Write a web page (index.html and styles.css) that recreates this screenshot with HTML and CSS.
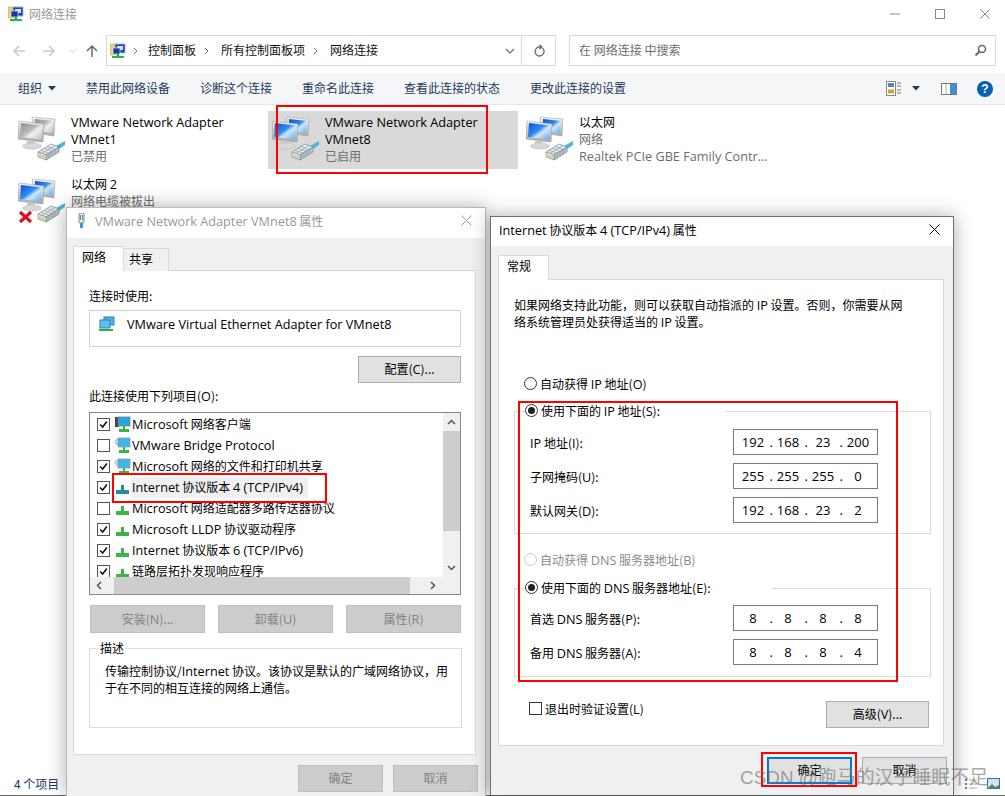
FILE: index.html
```html
<!DOCTYPE html>
<html lang="zh-CN">
<head>
<meta charset="utf-8">
<title>网络连接</title>
<link rel="stylesheet" href="styles.css">
</head>
<body>
<svg class="defs" width="0" height="0" aria-hidden="true">
  <defs>
    <linearGradient id="blue" x1="0" y1="0" x2="1" y2="1"><stop offset="0" stop-color="#0a4fd0"/><stop offset=".45" stop-color="#2f8df0"/><stop offset=".6" stop-color="#cfe8ff"/><stop offset="1" stop-color="#5aa9ef"/></linearGradient>
    <linearGradient id="grey" x1="0" y1="0" x2="1" y2="1"><stop offset="0" stop-color="#8d8d8d"/><stop offset=".45" stop-color="#b9b9b9"/><stop offset=".6" stop-color="#efefef"/><stop offset="1" stop-color="#c4c4c4"/></linearGradient>
    <linearGradient id="frame" x1="0" y1="0" x2="0" y2="1"><stop offset="0" stop-color="#f4f4f4"/><stop offset="1" stop-color="#a9a9a9"/></linearGradient>
    <symbol id="plug" viewBox="0 0 48 48">
      <path d="M38 31l9-5v4l-6 4z" fill="#49b6d8"/>
      <path d="M20 37l13-8 8 3-13 8z" fill="#e6ecef" stroke="#77868e" stroke-width=".7"/>
      <path d="M28 40l13-8v5l-13 8z" fill="#b4c0c6" stroke="#77868e" stroke-width=".7"/>
      <path d="M20 37l8 3v5l-8-3z" fill="#f2f4f5" stroke="#77868e" stroke-width=".7"/>
      <path d="M23 35.200l8 3M26 33.300l8 3M29 31.500l8 3M24 38.500l13-8" stroke="#8c9ba3" stroke-width=".7" fill="none"/>
      <path d="M31 38.200v5M34 36.300v5M37 34.500v5" stroke="#8c9ba3" stroke-width=".7" fill="none"/>
      <path d="M22 39v3M24 40v3M26 40.500v3" stroke="#c99a2e" stroke-width=".9" fill="none"/>
    </symbol>
    <symbol id="pc-blue" viewBox="0 0 48 48">
      <path d="M14 2l23 2-1 17-20-3z" fill="url(#frame)" stroke="#9a9a9a" stroke-width=".5"/>
      <path d="M17 4l18 2-1 12-17-2z" fill="url(#blue)"/>
      <path d="M1 6l25 3-1 18-25-3z" fill="url(#frame)" stroke="#8f8f8f" stroke-width=".5"/>
      <path d="M3 8l21 2.500-1 14-21-2.500z" fill="url(#blue)"/>
      <path d="M9 25l8 1-1 4-7-1z" fill="#c9c9c9"/>
      <ellipse cx="14" cy="31" rx="9.500" ry="3" fill="#d8d8d8" stroke="#b5b5b5" stroke-width=".5"/>
      <use href="#plug" width="48" height="48"/>
    </symbol>
    <symbol id="pc-grey" viewBox="0 0 48 48">
      <path d="M14 2l23 2-1 17-20-3z" fill="url(#frame)" stroke="#9a9a9a" stroke-width=".5"/>
      <path d="M17 4l18 2-1 12-17-2z" fill="url(#grey)"/>
      <path d="M1 6l25 3-1 18-25-3z" fill="url(#frame)" stroke="#8f8f8f" stroke-width=".5"/>
      <path d="M3 8l21 2.500-1 14-21-2.500z" fill="url(#grey)"/>
      <path d="M9 25l8 1-1 4-7-1z" fill="#c9c9c9"/>
      <ellipse cx="14" cy="31" rx="9.500" ry="3" fill="#d8d8d8" stroke="#b5b5b5" stroke-width=".5"/>
      <use href="#plug" width="48" height="48"/>
    </symbol>
    <symbol id="netfolder" viewBox="0 0 16 16">
      <path d="M0 1h6l1 1h2v10H0z" fill="#f2cf6b" stroke="#c8a13a" stroke-width=".5"/>
      <rect x="5" y="1" width="10" height="9" fill="#1c3fb8" stroke="#9fb4d6"/>
      <rect x="7" y="3" width="6" height="4" fill="#d8e6fb"/>
      <rect x="3" y="5" width="7" height="6" fill="#173aa8" stroke="#dfe8f5" stroke-width=".7"/>
      <rect x="7" y="11" width="2" height="2" fill="#16a34a"/>
      <rect x="2" y="13" width="12" height="2" fill="#21b455"/>
    </symbol>
    <symbol id="client" viewBox="0 0 17 17">
      <rect x="1" y="1" width="4" height="10" fill="#444"/>
      <rect x="4" y="1" width="12" height="9" fill="#2aa6df" stroke="#6f7f88" stroke-width=".8"/>
      <rect x="9" y="10" width="2" height="3" fill="#39b54a"/>
      <rect x="5" y="13" width="10" height="3" fill="#39b54a"/>
    </symbol>
    <symbol id="service" viewBox="0 0 17 17">
      <circle cx="4" cy="5" r="3" fill="#d6d6d6" stroke="#999" stroke-dasharray="1 1"/>
      <rect x="4" y="1" width="12" height="9" fill="#3fb4e8" stroke="#8aa0ad" stroke-width=".8"/>
      <rect x="9" y="10" width="2" height="3" fill="#39b54a"/>
      <rect x="5" y="13" width="10" height="3" fill="#39b54a"/>
    </symbol>
    <symbol id="proto" viewBox="0 0 17 17">
      <path d="M7 6h3v5H7z" fill="#39b54a"/>
      <path d="M2 11h13v4H2z" fill="#39b54a"/>
    </symbol>
    <symbol id="proto-sel" viewBox="0 0 17 17">
      <path d="M7 6h3v5H7z" fill="#1f8f9a"/>
      <path d="M2 11h13v4H2z" fill="#1f8f9a"/>
    </symbol>
    <symbol id="tick" viewBox="0 0 13 13">
      <path d="M2.500 6.500l3 3 5-6.500" fill="none" stroke="#111" stroke-width="1.800"/>
    </symbol>
  </defs>
</svg>

<div class="desktop">
  <main class="explorer">
    <header class="titlebar">
      <svg class="title-icon" width="16" height="16"><use href="#netfolder"/></svg>
      <span class="title-text">网络连接</span>
      <div class="win-controls">
        <svg width="12" height="12" viewBox="0 0 12 12"><path d="M1 6h10" stroke="#888" fill="none"/></svg>
        <svg width="12" height="12" viewBox="0 0 12 12"><rect x="1.500" y="1.500" width="9" height="9" stroke="#888" fill="none"/></svg>
        <svg width="12" height="12" viewBox="0 0 12 12"><path d="M1.500 1.500l9 9m0-9l-9 9" stroke="#888" fill="none"/></svg>
      </div>
    </header>

    <nav class="addressbar">
      <div class="nav-buttons">
        <svg width="16" height="16" viewBox="0 0 16 16"><path d="M14 8H3m5-5L3 8l5 5" stroke="#c9c9c9" stroke-width="1.500" fill="none"/></svg>
        <svg width="16" height="16" viewBox="0 0 16 16"><path d="M2 8h11M8 3l5 5-5 5" stroke="#c9c9c9" stroke-width="1.500" fill="none"/></svg>
        <svg width="8" height="8" viewBox="0 0 8 8"><path d="M1 2.500l3 3 3-3" stroke="#c9c9c9" fill="none"/></svg>
        <svg width="16" height="16" viewBox="0 0 16 16"><path d="M8 14V3M3 8l5-5 5 5" stroke="#6b6b6b" stroke-width="1.500" fill="none"/></svg>
      </div>
      <div class="address">
        <svg width="16" height="16"><use href="#netfolder"/></svg>
        <svg class="crumb-sep first-sep" width="6" height="8" viewBox="0 0 6 8"><path d="M1 1l3 3-3 3" stroke="#777" fill="none"/></svg>
        <span class="lift">控制面板</span>
        <svg class="crumb-sep" width="6" height="8" viewBox="0 0 6 8"><path d="M1 1l3 3-3 3" stroke="#777" fill="none"/></svg>
        <span class="lift">所有控制面板项</span>
        <svg class="crumb-sep" width="6" height="8" viewBox="0 0 6 8"><path d="M1 1l3 3-3 3" stroke="#777" fill="none"/></svg>
        <span class="lift">网络连接</span>
        <div class="address-end">
          <div class="address-btn"><svg width="10" height="8" viewBox="0 0 10 8"><path d="M1 2l4 4 4-4" stroke="#777" stroke-width="1.300" fill="none"/></svg></div>
          <div class="address-btn refresh"><svg width="12" height="13" viewBox="0 0 12 13"><path d="M9.500 4A4.500 4.500 0 1 1 6 3H8M6.500 .8L8.800 3 6.500 5.200" stroke="#6b6b6b" stroke-width="1.300" fill="none"/></svg></div>
        </div>
      </div>
      <div class="search">
        <span class="lift">在 网络连接 中搜索</span>
        <svg width="13" height="13" viewBox="0 0 13 13"><circle cx="8" cy="5" r="3.500" stroke="#666" stroke-width="1.500" fill="none"/><path d="M5.500 7.500L1.500 11.500" stroke="#666" stroke-width="2"/></svg>
      </div>
    </nav>

    <div class="toolbar">
      <span class="tool tool-org"><span class="lift">组织</span><svg class="caret" width="8" height="5" viewBox="0 0 8 5"><path d="M0 0h8L4 4.500z" fill="#1e3a5f"/></svg></span>
      <span class="tool lift">禁用此网络设备</span>
      <span class="tool lift">诊断这个连接</span>
      <span class="tool lift">重命名此连接</span>
      <span class="tool lift">查看此连接的状态</span>
      <span class="tool lift">更改此连接的设置</span>
      <div class="tool-icons">
        <svg width="15" height="15" viewBox="0 0 15 15"><rect x=".5" y=".5" width="9" height="14" fill="#fff" stroke="#888"/><rect x="2" y="2" width="6" height="4" fill="#4a8fc0"/><rect x="2" y="8.500" width="6" height="4" fill="#c9a13a"/><path d="M11 2h4M11 5h4M11 9h4M11 12h4" stroke="#777"/></svg>
        <svg class="caret2" width="8" height="5" viewBox="0 0 8 5"><path d="M0 0h8L4 4.500z" fill="#1e3a5f"/></svg>
        <svg class="pane-icon" width="16" height="12" viewBox="0 0 16 12"><rect x=".5" y=".5" width="15" height="11" fill="#fff" stroke="#777"/><rect x="9" y="1" width="6" height="10" fill="#3f8fd8"/><path d="M5 1v10" stroke="#aaa"/></svg>
        <span class="help">?</span>
      </div>
    </div>

    <section class="items">
      <article class="item">
        <svg class="pc" width="48" height="48"><use href="#pc-grey"/></svg>
        <div class="item-text"><div><span class="l">VMware Network Adapter</span></div><div><span class="l">VMnet1</span></div><div class="sub">已禁用</div></div>
      </article>
      <article class="item selected">
        <svg class="pc" width="48" height="48"><use href="#pc-blue"/></svg>
        <div class="item-text"><div><span class="l">VMware Network Adapter</span></div><div><span class="l">VMnet8</span></div><div class="sub">已启用</div></div>
      </article>
      <article class="item">
        <svg class="pc" width="48" height="48"><use href="#pc-blue"/></svg>
        <div class="item-text"><div>以太网</div><div class="sub">网络</div><div class="sub"><span class="l">Realtek PCIe GBE Family Contr...</span></div></div>
      </article>
      <article class="item">
        <div class="pc-wrap">
          <svg class="pc" width="48" height="48"><use href="#pc-blue"/></svg>
          <svg class="x-badge" width="15" height="14" viewBox="0 0 15 14"><path d="M2 2l11 10M13 2L2 12" stroke="#d9121f" stroke-width="3.200" fill="none"/></svg>
        </div>
        <div class="item-text"><div>以太网 <span class="l">2</span></div><div class="sub">网络电缆被拔出</div></div>
      </article>
    </section>

    <footer class="statusbar">
      <span>4 个项目</span>
      <div class="status-icons">
        <svg width="13" height="11" viewBox="0 0 13 11"><path d="M1 1h2v2H1zM1 5h2v2H1zM1 9h2v2H1z" fill="#777"/><path d="M5 2h8M5 6h8M5 10h8" stroke="#aaa"/></svg>
        <svg width="13" height="11" viewBox="0 0 13 11"><rect x=".5" y=".5" width="12" height="10" fill="#cfe3f5" stroke="#3b6f9e"/><path d="M1 10l4-4 3 3 4-2v3z" fill="#4a8a5a"/></svg>
      </div>
    </footer>
  </main>

  <section class="dialog adapter-dialog">
    <header class="dlg-title inactive">
      <svg width="9" height="16" viewBox="0 0 9 16"><rect x="2" y="0" width="5" height="10" rx="1" fill="#e2e6ea" stroke="#7b8a96"/><path d="M3.500 2v5M5.500 2v5" stroke="#7b8a96"/><rect x="3" y="10" width="3" height="5" fill="#2a9fd6"/></svg>
      <span class="dlg-title-text"><span class="l">VMware Network Adapter VMnet8</span> 属性</span>
      <svg class="dlg-close" width="11" height="11" viewBox="0 0 11 11"><path d="M.5 .5l10 10m0-10l-10 10" stroke="#9a9a9a" fill="none"/></svg>
    </header>
    <div class="dlg-body">
      <div class="tabs">
        <span class="tab active wide">网络</span>
        <span class="tab">共享</span>
      </div>
      <div class="panel">
        <div class="label">连接时使用:</div>
        <div class="adapter-box">
          <svg width="16" height="16" viewBox="0 0 16 16"><rect x="5" y="1" width="10" height="8" fill="#4fb3e8" stroke="#2f7fb3"/><rect x="1" y="4" width="10" height="8" fill="#5fc0ee" stroke="#2f7fb3"/><rect x="0" y="13" width="14" height="2" fill="#21b455"/></svg>
          <span class="l">VMware Virtual Ethernet Adapter for VMnet8</span>
        </div>
        <div class="btn-row end"><button class="btn configure">配置(<span class="l">C</span>)...</button></div>
        <div class="label list-label">此连接使用下列项目(<span class="l">O</span>):</div>
        <div class="listbox">
          <div class="list-rows">
            <div class="row"><span class="check"><svg width="11" height="11"><use href="#tick"/></svg></span><svg class="row-icon" width="17" height="17"><use href="#client"/></svg><span class="row-text"><span class="l">Microsoft</span> 网络客户端</span></div>
            <div class="row"><span class="check"></span><svg class="row-icon" width="17" height="17"><use href="#service"/></svg><span class="row-text"><span class="l">VMware Bridge Protocol</span></span></div>
            <div class="row"><span class="check"><svg width="11" height="11"><use href="#tick"/></svg></span><svg class="row-icon" width="17" height="17"><use href="#service"/></svg><span class="row-text"><span class="l">Microsoft</span> 网络的文件和打印机共享</span></div>
            <div class="row sel"><span class="check"><svg width="11" height="11"><use href="#tick"/></svg></span><svg class="row-icon" width="17" height="17"><use href="#proto-sel"/></svg><span class="row-text"><span class="l">Internet</span> 协议版本 <span class="l">4 (TCP/IPv4)</span></span></div>
            <div class="row"><span class="check"></span><svg class="row-icon" width="17" height="17"><use href="#proto"/></svg><span class="row-text"><span class="l">Microsoft</span> 网络适配器多路传送器协议</span></div>
            <div class="row"><span class="check"><svg width="11" height="11"><use href="#tick"/></svg></span><svg class="row-icon" width="17" height="17"><use href="#proto"/></svg><span class="row-text"><span class="l">Microsoft LLDP</span> 协议驱动程序</span></div>
            <div class="row"><span class="check"><svg width="11" height="11"><use href="#tick"/></svg></span><svg class="row-icon" width="17" height="17"><use href="#proto"/></svg><span class="row-text"><span class="l">Internet</span> 协议版本 <span class="l">6 (TCP/IPv6)</span></span></div>
            <div class="row"><span class="check"><svg width="11" height="11"><use href="#tick"/></svg></span><svg class="row-icon" width="17" height="17"><use href="#proto"/></svg><span class="row-text">链路层拓扑发现响应程序</span></div>
          </div>
          <div class="vscroll">
            <svg width="9" height="6" viewBox="0 0 9 6"><path d="M1 5l3.500-3.500L8 5" stroke="#555" stroke-width="1.500" fill="none"/></svg>
            <div class="vthumb"></div>
            <svg width="9" height="6" viewBox="0 0 9 6"><path d="M1 1l3.500 3.500L8 1" stroke="#555" stroke-width="1.500" fill="none"/></svg>
          </div>
          <div class="hscroll">
            <svg width="6" height="9" viewBox="0 0 6 9"><path d="M5 1L1.500 4.500 5 8" stroke="#555" stroke-width="1.500" fill="none"/></svg>
            <div class="hthumb"></div>
            <svg width="6" height="9" viewBox="0 0 6 9"><path d="M1 1l3.500 3.500L1 8" stroke="#555" stroke-width="1.500" fill="none"/></svg>
          </div>
        </div>
        <div class="action-row">
          <button class="btn disabled">安装(<span class="l">N</span>)...</button>
          <button class="btn disabled">卸载(<span class="l">U</span>)</button>
          <button class="btn disabled">属性(<span class="l">R</span>)</button>
        </div>
        <div class="desc-group">
          <span class="desc-legend">描述</span>
          <p class="desc-text">传输控制协议/<span class="l">Internet</span> 协议。该协议是默认的广域网络协议，用于在不同的相互连接的网络上通信。</p>
        </div>
      </div>
      <div class="dlg-footer">
        <button class="btn disabled foot">确定</button>
        <button class="btn disabled foot">取消</button>
      </div>
    </div>
  </section>

  <section class="dialog ipv4-dialog">
    <header class="dlg-title">
      <span class="dlg-title-text"><span class="l">Internet</span> 协议版本 <span class="l">4 (TCP/IPv4)</span> 属性</span>
      <svg class="dlg-close" width="11" height="11" viewBox="0 0 11 11"><path d="M.5 .5l10 10m0-10l-10 10" stroke="#111" fill="none"/></svg>
    </header>
    <div class="dlg-body ipv4-body">
      <div class="tabs"><span class="tab active wide">常规</span></div>
      <div class="panel ipv4-panel">
        <p class="intro">如果网络支持此功能，则可以获取自动指派的 <span class="l">IP</span> 设置。否则，你需要从网络系统管理员处获得适当的 <span class="l">IP</span> 设置。</p>
        <label class="radio-line first"><span class="radio"></span>自动获得 <span class="l">IP</span> 地址(<span class="l">O</span>)</label>
        <div class="ip-group g1">
          <label class="radio-line legend wide-a"><span class="radio on"></span>使用下面的 <span class="l">IP</span> 地址(<span class="l">S</span>):</label>
          <div class="ip-row"><span><span class="l">IP</span> 地址(<span class="l">I</span>):</span><div class="ip-input"><span class="oct">192</span><span class="dot">.</span><span class="oct">168</span><span class="dot">.</span><span class="oct">23</span><span class="dot">.</span><span class="oct">200</span></div></div>
          <div class="ip-row"><span>子网掩码(<span class="l">U</span>):</span><div class="ip-input"><span class="oct">255</span><span class="dot">.</span><span class="oct">255</span><span class="dot">.</span><span class="oct">255</span><span class="dot">.</span><span class="oct">0</span></div></div>
          <div class="ip-row"><span>默认网关(<span class="l">D</span>):</span><div class="ip-input"><span class="oct">192</span><span class="dot">.</span><span class="oct">168</span><span class="dot">.</span><span class="oct">23</span><span class="dot">.</span><span class="oct">2</span></div></div>
        </div>
        <label class="radio-line dns-auto"><span class="radio off"></span>自动获得 <span class="l">DNS</span> 服务器地址(<span class="l">B</span>)</label>
        <div class="ip-group g2">
          <label class="radio-line legend wide-b"><span class="radio on"></span>使用下面的 <span class="l">DNS</span> 服务器地址(<span class="l">E</span>):</label>
          <div class="ip-row"><span>首选 <span class="l">DNS</span> 服务器(<span class="l">P</span>):</span><div class="ip-input"><span class="oct">8</span><span class="dot">.</span><span class="oct">8</span><span class="dot">.</span><span class="oct">8</span><span class="dot">.</span><span class="oct">8</span></div></div>
          <div class="ip-row"><span>备用 <span class="l">DNS</span> 服务器(<span class="l">A</span>):</span><div class="ip-input"><span class="oct">8</span><span class="dot">.</span><span class="oct">8</span><span class="dot">.</span><span class="oct">8</span><span class="dot">.</span><span class="oct">4</span></div></div>
        </div>
        <div class="validate-row">
          <label class="validate"><span class="check big"></span>退出时验证设置(<span class="l">L</span>)</label>
          <button class="btn configure">高级(<span class="l">V</span>)...</button>
        </div>
      </div>
      <div class="dlg-footer ipv4-footer">
        <button class="btn foot primary">确定</button>
        <button class="btn foot plain">取消</button>
      </div>
    </div>
  </section>

  <div class="mark mark-adapter"></div>
  <div class="mark mark-proto"></div>
  <div class="mark mark-ip"></div>
  <div class="mark mark-ok"></div>
  <div class="watermark">CSDN @跑马的汉子睡眠不足</div>
</div>
</body>
</html>
```
FILE: styles.css
```css
* { box-sizing: border-box; }
html, body { margin: 0; padding: 0; }
body {
  width: 1005px;
  height: 796px;
  overflow: hidden;
  background: #fff;
  font-family: "Noto Sans CJK SC", "Open Sans", sans-serif;
  font-size: 12px;
  line-height: 17px;
  color: #000;
}
.l { font-family: "Open Sans", "Noto Sans", sans-serif; font-size: 12.700px; line-height: 0; }
.lift { padding-bottom: 2px; }
svg { display: block; flex: none; }
.defs { height: 0; }
p { margin: 0; }

.desktop { position: relative; width: 1005px; height: 796px; overflow: hidden; }

/* explorer */
.explorer { display: flex; flex-direction: column; height: 796px; border-bottom: 1px solid #5d6658; }
.titlebar { display: flex; align-items: center; height: 32px; padding: 0 0 5px 8px; flex: none; }
.title-text { margin-left: 5px; color: #999; }
.win-controls { margin-left: auto; display: flex; gap: 33px; padding-right: 14px; }
.addressbar { display: flex; height: 41px; padding: 3px 9px 0 0; flex: none; }
.nav-buttons { display: flex; align-items: center; width: 106px; padding: 0 0 7px 11px; gap: 14px; }
.nav-buttons svg:nth-child(3) { margin-left: -2px; }
.nav-buttons svg:nth-child(4) { margin-left: -7px; }
.address { width: 450px; height: 31px; border: 1px solid #d9d9d9; display: flex; align-items: center; padding-left: 3px; color: #111; }
.crumb-sep { margin: 0 11px 0 8px; }
.crumb-sep.first-sep { margin: 0 9px 0 7px; }
.address-end { margin-left: auto; display: flex; height: 100%; }
.address-btn { width: 22px; display: flex; align-items: center; justify-content: center; }
.address-btn.refresh { width: 34px; border-left: 1px solid #d9d9d9; }
.search { margin-left: 13px; flex: 1; height: 31px; border: 1px solid #d9d9d9; display: flex; align-items: center; justify-content: space-between; padding: 0 8px 0 9px; color: #6d6d6d; }
.toolbar { display: flex; align-items: center; height: 32px; flex: none; background: #f5f6f7; border-bottom: 1px solid #e4e6e8; padding: 0 18px; color: #1e395b; }
.tool { margin-right: 30px; white-space: nowrap; }
.tool-org { display: flex; align-items: center; }
.caret { margin-left: 6px; }
.tool-icons { margin-left: auto; display: flex; align-items: center; }
.caret2 { margin-left: 11px; }
.pane-icon { margin-left: 21px; }
.help { margin-left: 20px; margin-right: -6px; width: 16px; height: 16px; border-radius: 50%; background: #0a5fb4; color: #fff; font: bold 12px/16px "Liberation Sans", sans-serif; text-align: center; }

.items { flex: 1; display: grid; grid-template-columns: repeat(3, 250px); grid-auto-rows: 58px; gap: 4px; padding: 6px 0 0 14px; align-content: start; }
.item { display: flex; padding: 2px 0 0 4px; }
.item-text { margin-left: 5px; white-space: nowrap; min-width: 0; }
.item .pc { margin-top: 2px; }
.item.selected { background: #d9d9d9; }
.sub { color: #6d6d6d; }
.pc-wrap { position: relative; width: 48px; height: 48px; }
.x-badge { position: absolute; left: 0; top: 35px; }
.statusbar { display: flex; align-items: center; justify-content: space-between; height: 24px; flex: none; padding: 0 5px 0 14px; color: #1e395b; }
.status-icons { display: flex; gap: 10px; }

/* dialogs */
.dialog { position: absolute; display: flex; flex-direction: column; background: #f0f0f0; box-shadow: 0 0 18px rgba(0,0,0,.32); border: 1px solid #b9b9b9; border-bottom: 0; }
.adapter-dialog { left: 66px; top: 207px; width: 420px; height: 589px; }
.ipv4-dialog { left: 490px; top: 216px; width: 464px; height: 579px; border-color: #6f6f6f; }
.dlg-title { display: flex; align-items: center; height: 30px; padding: 0 13px 5px 10px; background: #fff; flex: none; }
.dlg-title.inactive { color: #999; }
.dlg-title-text { margin-left: 9px; white-space: nowrap; }
.ipv4-dialog .dlg-title { height: 29px; padding-left: 8px; padding-bottom: 4px; }
.ipv4-dialog .dlg-title-text { margin-left: 0; }
.dlg-close { margin-left: auto; }
.dlg-body { flex: 1; padding: 8px 9px 0 6px; }
.ipv4-body { padding: 9px 6px 0 7px; }
.tabs { display: flex; align-items: flex-end; height: 25px; position: relative; z-index: 1; margin-bottom: -1px; }
.tab { height: 23px; width: 45px; border: 1px solid #d9d9d9; border-bottom: 0; border-left: 0; background: #f0f0f0; padding-left: 5px; line-height: 19px; }
.tab.active { height: 25px; background: #fff; border-left: 1px solid #d9d9d9; line-height: 19px; }
.tab.wide { width: 51px; padding-left: 8px; }
.panel { height: 485px; border: 1px solid #d9d9d9; background: #fff; padding: 16px 14px 0 15px; }
.ipv4-panel { height: 467px; margin-right: 3px; padding-left: 15px; padding-right: 12px; }
.label { height: 17px; }
.adapter-box { margin-top: 6px; height: 37px; border: 1px solid #d0d0d0; display: flex; align-items: flex-start; padding: 5px 0 0 9px; gap: 12px; }
.adapter-box .l { line-height: 17px; }
.btn-row.end { display: flex; justify-content: flex-end; margin-top: 9px; }
.btn { font: inherit; color: #000; padding: 0 0 2px; border: 1px solid #adadad; background: #e1e1e1; }
.configure { width: 103px; height: 27px; }
.list-label { margin-top: 4px; }
.listbox { margin-top: 8px; height: 183px; width: 372px; border: 1px solid #828790; display: grid; grid-template-columns: 1fr 17px; grid-template-rows: 1fr 17px; background: #fff; overflow: hidden; }
.list-rows { padding-top: 1px; overflow: hidden; }
.row { display: flex; align-items: center; height: 21px; padding-left: 7px; white-space: nowrap; }
.check { width: 13px; height: 13px; border: 1px solid #555; display: flex; align-items: center; justify-content: center; flex: none; background: #fff; }
.row-icon { margin-left: 4px; }
.row-text { padding: 0 5px 0 1px; height: 21px; line-height: 19px; }
.row.sel .row-text { background: #f0f0f0; }
.vscroll { background: #f0f0f0; display: flex; flex-direction: column; align-items: center; justify-content: space-between; padding: 6px 0 6px; }
.vthumb { flex: none; width: 100%; height: 100px; margin-bottom: 28px; background: #cdcdcd; }
.hscroll { grid-column: 1 / 3; background: #f0f0f0; display: flex; align-items: center; padding: 0 24px 0 6px; }
.hthumb { height: 100%; width: 303px; margin: 0 20px 0 12px; background: #cdcdcd; }
.action-row { display: flex; gap: 13px; margin: 10px 0 0 1px; }
.btn.disabled { background: #ccc; border-color: #bfbfbf; color: #838383; width: 115px; height: 28px; }
.desc-group { margin-top: 15px; height: 80px; width: 373px; border: 1px solid #dcdcdc; padding: 0 10px 0 15px; }
.desc-legend { display: block; width: 28px; margin: -10px 0 0 -7px; padding: 0 2px; background: #fff; }
.desc-text { margin-top: 6px; }
.dlg-footer { display: flex; justify-content: flex-end; gap: 10px; padding-top: 10px; margin-right: -2px; }
.btn.foot { width: 85px; height: 27px; }
.ipv4-footer { padding-top: 11px; margin-right: 0; }
.btn.primary { border: 2px solid #0078d7; background: #e1e1e1; }
.btn.plain { background: #e1e1e1; }

.intro { width: 395px; }
.radio-line { display: flex; align-items: center; height: 17px; white-space: pre; }
.radio { width: 13px; height: 13px; border-radius: 50%; border: 1px solid #333; margin-right: 3px; flex: none; background: #fff; position: relative; }
.radio.on::after { content: ""; position: absolute; left: 2px; top: 2px; width: 7px; height: 7px; border-radius: 50%; background: #222; }
.radio.off { border-color: #c8c8c8; }
.first { margin: 45px 0 0 10px; }
.dns-auto { margin: 17px 0 0 10px; color: #8a8a8a; }
.ip-group { width: 417px; border: 1px solid #dcdcdc; padding: 0 52px 0 15px; }
.g1 { margin-top: 19px; height: 123px; }
.g2 { margin-top: 20px; height: 89px; }
.legend { margin: -10px 0 0 -5px; width: 200px; background: #fff; }
.wide-b { width: 247px; }
.wide-a { margin-bottom: 10px; }
.wide-b { margin-bottom: 9px; }
.ip-row { display: flex; align-items: center; justify-content: space-between; height: 26px; margin-bottom: 8px; }
.ip-input { width: 145px; height: 26px; border: 1px solid #7a7a7a; display: flex; align-items: center; padding-left: 4px; font-family: "Open Sans", sans-serif; font-size: 13px; }
.oct { width: 30px; text-align: center; }
.dot { width: 5px; text-align: right; }
.validate-row { display: flex; align-items: center; justify-content: space-between; margin: 24px 2px 0 15px; }
.validate { display: flex; align-items: center; margin-top: -12px; }
.check.big { margin-right: 3px; border-color: #333; }

/* annotations */
.mark { position: absolute; border: 2px solid #f00; }
.mark-adapter { left: 276px; top: 105px; width: 212px; height: 69px; }
.mark-proto { left: 112px; top: 473px; width: 215px; height: 30px; }
.mark-ip { left: 518px; top: 401px; width: 380px; height: 281px; }
.mark-ok { left: 761px; top: 752px; width: 96px; height: 35px; }
.watermark { position: absolute; left: 740px; top: 764px; font-family: "Liberation Sans", "Noto Sans CJK SC", sans-serif; font-size: 18.900px; line-height: 28px; color: rgba(110,110,110,.62); white-space: nowrap; }
```
